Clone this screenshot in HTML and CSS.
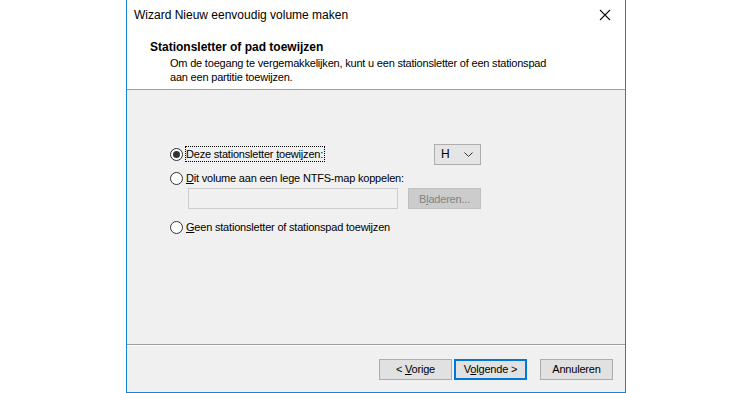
FILE: index.html
```html
<!DOCTYPE html>
<html>
    <head>
        <title>Wizard Nieuw eenvoudig volume maken</title>
        <link rel="stylesheet" href="styles.css">
    </head>
    <body>
        <div class="window">
            <div class="titlebar">
                <span class="title">Wizard Nieuw eenvoudig volume maken</span>
                <svg class="close" width="12" height="12" viewBox="0 0 12 12">
                    <path d="M1 1 L11 11 M11 1 L1 11" stroke="#111" stroke-width="1.1" fill="none"/>
                </svg>
            </div>

            <div class="header">
                <h1>Stationsletter of pad toewijzen</h1>
                <p>Om de toegang te vergemakkelijken, kunt u een stationsletter of een stationspad<br>
                aan een partitie toewijzen.</p>
            </div>

            <div class="content">
                <div class="options">
                    <div class="row">
                        <span class="radio checked"></span>
                        <span class="label focus">Deze stationsletter <u>t</u>oewijzen:</span>
                        <div class="select"><span>H</span> <svg width="9" height="5" viewBox="0 0 9 5"><path d="M0.5 0.5 L4.5 4.5 L8.5 0.5" stroke="#333" fill="none"/></svg></div>
                    </div>
                    <div class="row">
                        <span class="radio"></span>
                        <span class="label"><u>D</u>it volume aan een lege NTFS-map koppelen:</span>
                    </div>
                    <div class="path-row">
                        <div class="textbox"></div>
                        <div class="button disabled"><span>B<u>l</u>aderen...</span></div>
                    </div>
                    <div class="row">
                        <span class="radio"></span>
                        <span class="label"><u>G</u>een stationsletter of stationspad toewijzen</span>
                    </div>
                </div>
            </div>

            <div class="footer">
                <div class="button"><span>&lt; <u>V</u>orige</span></div>
                <div class="button default"><span>V<u>o</u>lgende &gt;</span></div>
                <div class="button cancel"><span>Annuleren</span></div>
            </div>
        </div>
    </body>
</html>
```

FILE: styles.css
```css
html {
    font-family: "Liberation Sans", Arial, sans-serif;
    font-size: 11px;
    letter-spacing: -0.2px;
}
body {
    margin: 0;
    background: #fff;
    color: #000;
}
.window {
    box-sizing: border-box;
    width: 500px;
    height: 393px;
    margin: 0 auto;
    border: 1px solid #1883d7;
    border-top: none;
    display: flex;
    flex-direction: column;
    background: #f0f0f0;
}
.titlebar {
    height: 30px;
    background: #fff;
    display: flex;
    align-items: center;
    padding: 0 14px 0 7px;
}
.title {
    flex: 1;
    font-size: 12px;
    letter-spacing: 0;
}
.header {
    height: 59px;
    background: #fff;
    border-bottom: 1px solid #a0a0a0;
    padding: 0 0 0 23px;
}
.header h1 {
    font-size: 12px;
    letter-spacing: 0;
    margin: 10px 0 2px 0;
}
.header p {
    margin: 0 0 0 20px;
    line-height: 14px;
    white-space: nowrap;
}
.content {
    flex: 1;
    border-bottom: 1px solid #a0a0a0;
    padding: 52px 0 0 43px;
}
.options {
    width: 311px;
}
.row {
    display: flex;
    align-items: center;
    height: 24px;
}
.radio {
    box-sizing: border-box;
    width: 13px;
    height: 13px;
    border: 1px solid #333;
    border-radius: 50%;
    background: #fff;
    margin-right: 2px;
    display: flex;
    align-items: center;
    justify-content: center;
}
.radio.checked::after {
    content: "";
    width: 7px;
    height: 7px;
    border-radius: 50%;
    background: #333;
}
.label {
    padding: 1px 1px 1px 0;
    border: 1px solid transparent;
}
.label.focus {
    border: 1px dotted #000;
}
.select {
    box-sizing: border-box;
    margin-left: auto;
    width: 47px;
    height: 21px;
    background: #e5e5e5;
    border: 1px solid #adadad;
    display: flex;
    align-items: center;
    justify-content: space-between;
    padding: 0 7px 0 6px;
    font-size: 12px;
}
.path-row {
    display: flex;
    justify-content: space-between;
    margin: -2px 0 6px 18px;
    height: 21px;
}
.textbox {
    box-sizing: border-box;
    width: 210px;
    height: 21px;
    border: 1px solid #cccccc;
    background: #f0f0f0;
}
.button {
    box-sizing: border-box;
    height: 21px;
    width: 73px;
    border: 1px solid #adadad;
    background: #e1e1e1;
    display: flex;
    align-items: center;
    justify-content: center;
}
.button.disabled {
    background: #cccccc;
    border-color: #bfbfbf;
    color: #838383;
}
.footer {
    height: 46px;
    border-top: 1px solid #fff;
    display: flex;
    align-items: center;
    justify-content: flex-end;
    padding: 0 12px 0 0;
    gap: 2px;
}
.button.default {
    border: 2px solid #0078d7;
}
.button.cancel {
    margin-left: 11px;
}
```
